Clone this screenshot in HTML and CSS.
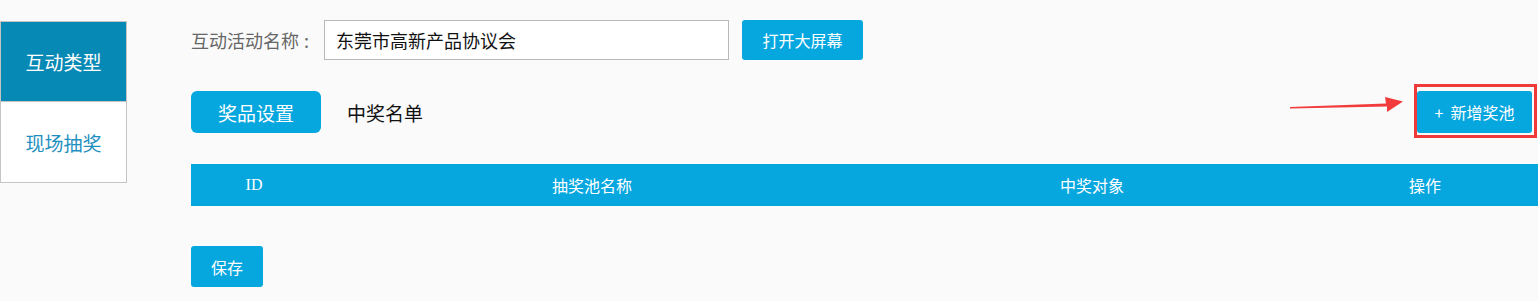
FILE: index.html
```html
<!DOCTYPE html>
<html lang="zh">
<head>
<meta charset="utf-8">
<link rel="stylesheet" href="styles.css">
</head>
<body>
<div class="page">
  <aside class="sidebar">
    <div class="side-item active">互动类型</div>
    <div class="side-item">现场抽奖</div>
  </aside>
  <main class="main">
    <div class="row-name">
      <span class="label">互动活动名称<span class="colon">:</span></span>
      <input class="name-input" type="text" value="东莞市高新产品协议会">
      <button class="btn btn-screen">打开大屏幕</button>
    </div>
    <div class="row-tabs">
      <div class="tabs">
        <button class="tab tab-active">奖品设置</button>
        <span class="tab">中奖名单</span>
      </div>
      <div class="add-wrap">
        <button class="btn btn-add"><span class="plus">+</span>新增奖池</button>
        <div class="highlight"></div>
        <svg class="arrow" width="130" height="20" viewBox="0 0 130 20">
          <polygon points="0,13 96,9.5 95,3 113,7.5 97,18 97,12.5 0,14.5" fill="#f23c3c"/>
        </svg>
      </div>
    </div>
    <div class="table-head">
      <div class="th">ID</div>
      <div class="th">抽奖池名称</div>
      <div class="th">中奖对象</div>
      <div class="th">操作</div>
    </div>
    <button class="btn btn-save">保存</button>
  </main>
</div>
</body>
</html>
```
FILE: styles.css
```css
html, body {
  margin: 0;
  padding: 0;
  background: #fafafa;
  font-family: "Microsoft YaHei", "Noto Sans CJK SC", "Noto Sans", sans-serif;
}
.page {
  display: flex;
  align-items: flex-start;
}
.sidebar {
  margin-top: 21px;
  width: 125px;
  border: 1px solid #c4c4c4;
  background: #ffffff;
  flex: none;
}
.side-item {
  height: 80px;
  display: flex;
  align-items: center;
  justify-content: center;
  font-size: 19px;
  color: #1e8fc0;
}
.side-item.active {
  background: #0789b5;
  color: #ffffff;
  height: 79px;
  border-bottom: 1px solid #c4c4c4;
}
.main {
  margin-left: 64px;
  padding-top: 20px;
  flex: 1;
}
.row-name {
  display: flex;
  align-items: center;
  height: 40px;
}
.label {
  font-size: 18px;
  color: #666666;
  width: 133px;
  white-space: nowrap;
}
.colon {
  margin-left: 5px;
}
.name-input {
  box-sizing: border-box;
  width: 405px;
  height: 40px;
  border: 1px solid #b8b8b8;
  background: #ffffff;
  padding: 0 11px;
  font-family: inherit;
  font-size: 18px;
  color: #111111;
  outline: none;
}
.btn {
  border: none;
  background: #06a7df;
  color: #ffffff;
  font-family: inherit;
  cursor: pointer;
  padding: 0;
}
.btn-screen {
  margin-left: 13px;
  width: 121px;
  height: 40px;
  border-radius: 3px;
  font-size: 16px;
}
.row-tabs {
  margin-top: 31px;
  height: 42px;
  display: flex;
  justify-content: space-between;
  align-items: center;
}
.tabs {
  display: flex;
  align-items: center;
  gap: 26px;
}
.tab {
  font-size: 19px;
  color: #111111;
}
.tab-active {
  width: 130px;
  height: 42px;
  border: none;
  border-radius: 6px;
  background: #06a7df;
  color: #ffffff;
  font-family: inherit;
  font-size: 19px;
  padding: 0;
}
.add-wrap {
  position: relative;
  margin-right: 6px;
}
.btn-add {
  display: flex;
  align-items: center;
  justify-content: center;
  width: 115px;
  height: 42px;
  border-radius: 3px;
  font-size: 16px;
}
.plus {
  font-size: 16px;
  margin-right: 7px;
}
.highlight {
  position: absolute;
  left: -3px;
  top: -7px;
  width: 117px;
  height: 48px;
  border: 3px solid #f03a3a;
}
.arrow {
  position: absolute;
  left: -127px;
  top: 3px;
}
.table-head {
  margin-top: 31px;
  height: 42px;
  background: #06a7df;
  display: grid;
  grid-template-columns: 126px 550px 450px 216px 1fr;
  align-items: center;
}
.th {
  text-align: center;
  color: #ffffff;
  font-size: 16px;
}
.th:first-child {
  font-family: "Liberation Serif", serif;
  font-size: 16px;
}
.btn-save {
  display: block;
  margin-top: 40px;
  width: 72px;
  height: 41px;
  border-radius: 3px;
  font-size: 16px;
}
```
